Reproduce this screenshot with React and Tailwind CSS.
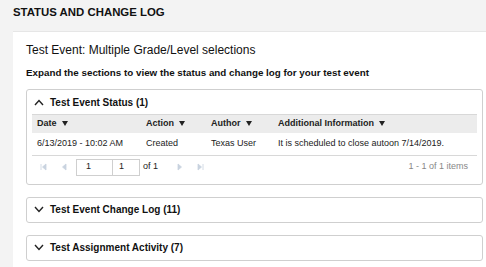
import React from 'react'

const Caret = () => (
  <svg width="6" height="5" viewBox="0 0 6 5" className="ml-[5px] inline-block">
    <path d="M0 0h6L3 5z" fill="#222" />
  </svg>
)

const Chevron = ({ up }) => (
  <svg width="10" height="7" viewBox="0 0 10 7" className="mr-[6px]">
    <path
      d={up ? 'M1 6l4-4.5L9 6' : 'M1 1l4 4.5L9 1'}
      fill="none"
      stroke="#222"
      strokeWidth="1.4"
    />
  </svg>
)

const PagerIcon = ({ kind }) => {
  const paths = {
    first: 'M1 1v6M6 1L2.5 4 6 7z',
    prev: 'M5 1L1.5 4 5 7z',
    next: 'M1 1l3.5 3L1 7z',
    last: 'M1 1l3.5 3L1 7zM6 1v6',
  }
  return (
    <svg width="7" height="8" viewBox="0 0 7 8">
      <path d={paths[kind]} fill="#c9d3df" stroke="#c9d3df" strokeWidth="0.8" />
    </svg>
  )
}

function Section({ title, open, children }) {
  return (
    <div className="border border-[#cfcfcf] rounded-[3px] bg-white">
      <div className="flex items-center h-[24px] pl-[7px] text-[10px] font-bold text-[#111]">
        <Chevron up={open} />
        {title}
      </div>
      {children}
    </div>
  )
}

export default function App() {
  return (
    <div
      className="w-[486px] h-[267px] overflow-hidden bg-[#f3f3f3]"
      style={{ fontFamily: '"Liberation Sans", Arial, sans-serif' }}
    >
      <div className="h-[31px] pl-[13px] pt-[4px] text-[11.4px] font-bold text-[#111]">
        STATUS AND CHANGE LOG
      </div>
      <div className="ml-[13px] bg-white border-t border-[#e6e6e6] pl-[13px] pr-[3px] h-[236px]">
        <div className="pt-[11px] text-[12px] text-[#111] leading-[15px]">
          Test Event: Multiple Grade/Level selections
        </div>
        <div className="mt-[9px] text-[9.8px] font-bold text-[#111] leading-[12px]">
          Expand the sections to view the status and change log for your test event
        </div>
        <div className="mt-[10px] flex flex-col gap-[12px]">
          <Section title="Test Event Status (1)" open>
            <div className="mx-[5px] mb-[5px] border-t border-[#d8d8d8]">
              <table className="w-full text-[9px] text-[#222] border-collapse">
                <thead>
                  <tr className="bg-[#ececec] h-[18px] text-left">
                    <th className="w-[109px] pl-[5px] font-bold">Date<Caret /></th>
                    <th className="w-[65px] pl-[5px] font-bold">Action<Caret /></th>
                    <th className="w-[67px] pl-[5px] font-bold">Author<Caret /></th>
                    <th className="pl-[5px] font-bold">Additional Information<Caret /></th>
                  </tr>
                </thead>
                <tbody>
                  <tr className="h-[22px] border-b border-[#d8d8d8]">
                    <td className="pl-[5px]">6/13/2019 - 10:02 AM</td>
                    <td className="pl-[5px]">Created</td>
                    <td className="pl-[5px]">Texas User</td>
                    <td className="pl-[5px]">It is scheduled to close autoon 7/14/2019.</td>
                  </tr>
                </tbody>
              </table>
              <div className="flex items-center h-[23px] text-[9px] text-[#222]">
                <div className="ml-[8px] flex items-center gap-[14px]">
                  <PagerIcon kind="first" />
                  <PagerIcon kind="prev" />
                </div>
                <div className="ml-[8px] flex h-[17px]">
                  <div className="w-[37px] border border-[#cfcfcf] pl-[9px] flex items-center">1</div>
                  <div className="w-[27px] border border-l-0 border-[#cfcfcf] pl-[6px] flex items-center">1</div>
                </div>
                <span className="ml-[3px]">of 1</span>
                <div className="ml-[19px] flex items-center gap-[13px]">
                  <PagerIcon kind="next" />
                  <PagerIcon kind="last" />
                </div>
                <span className="ml-auto mr-[9px] text-[#888]">1 - 1 of 1 items</span>
              </div>
            </div>
          </Section>
          <Section title="Test Event Change Log (11)" />
          <Section title="Test Assignment Activity (7)" />
        </div>
      </div>
    </div>
  )
}
